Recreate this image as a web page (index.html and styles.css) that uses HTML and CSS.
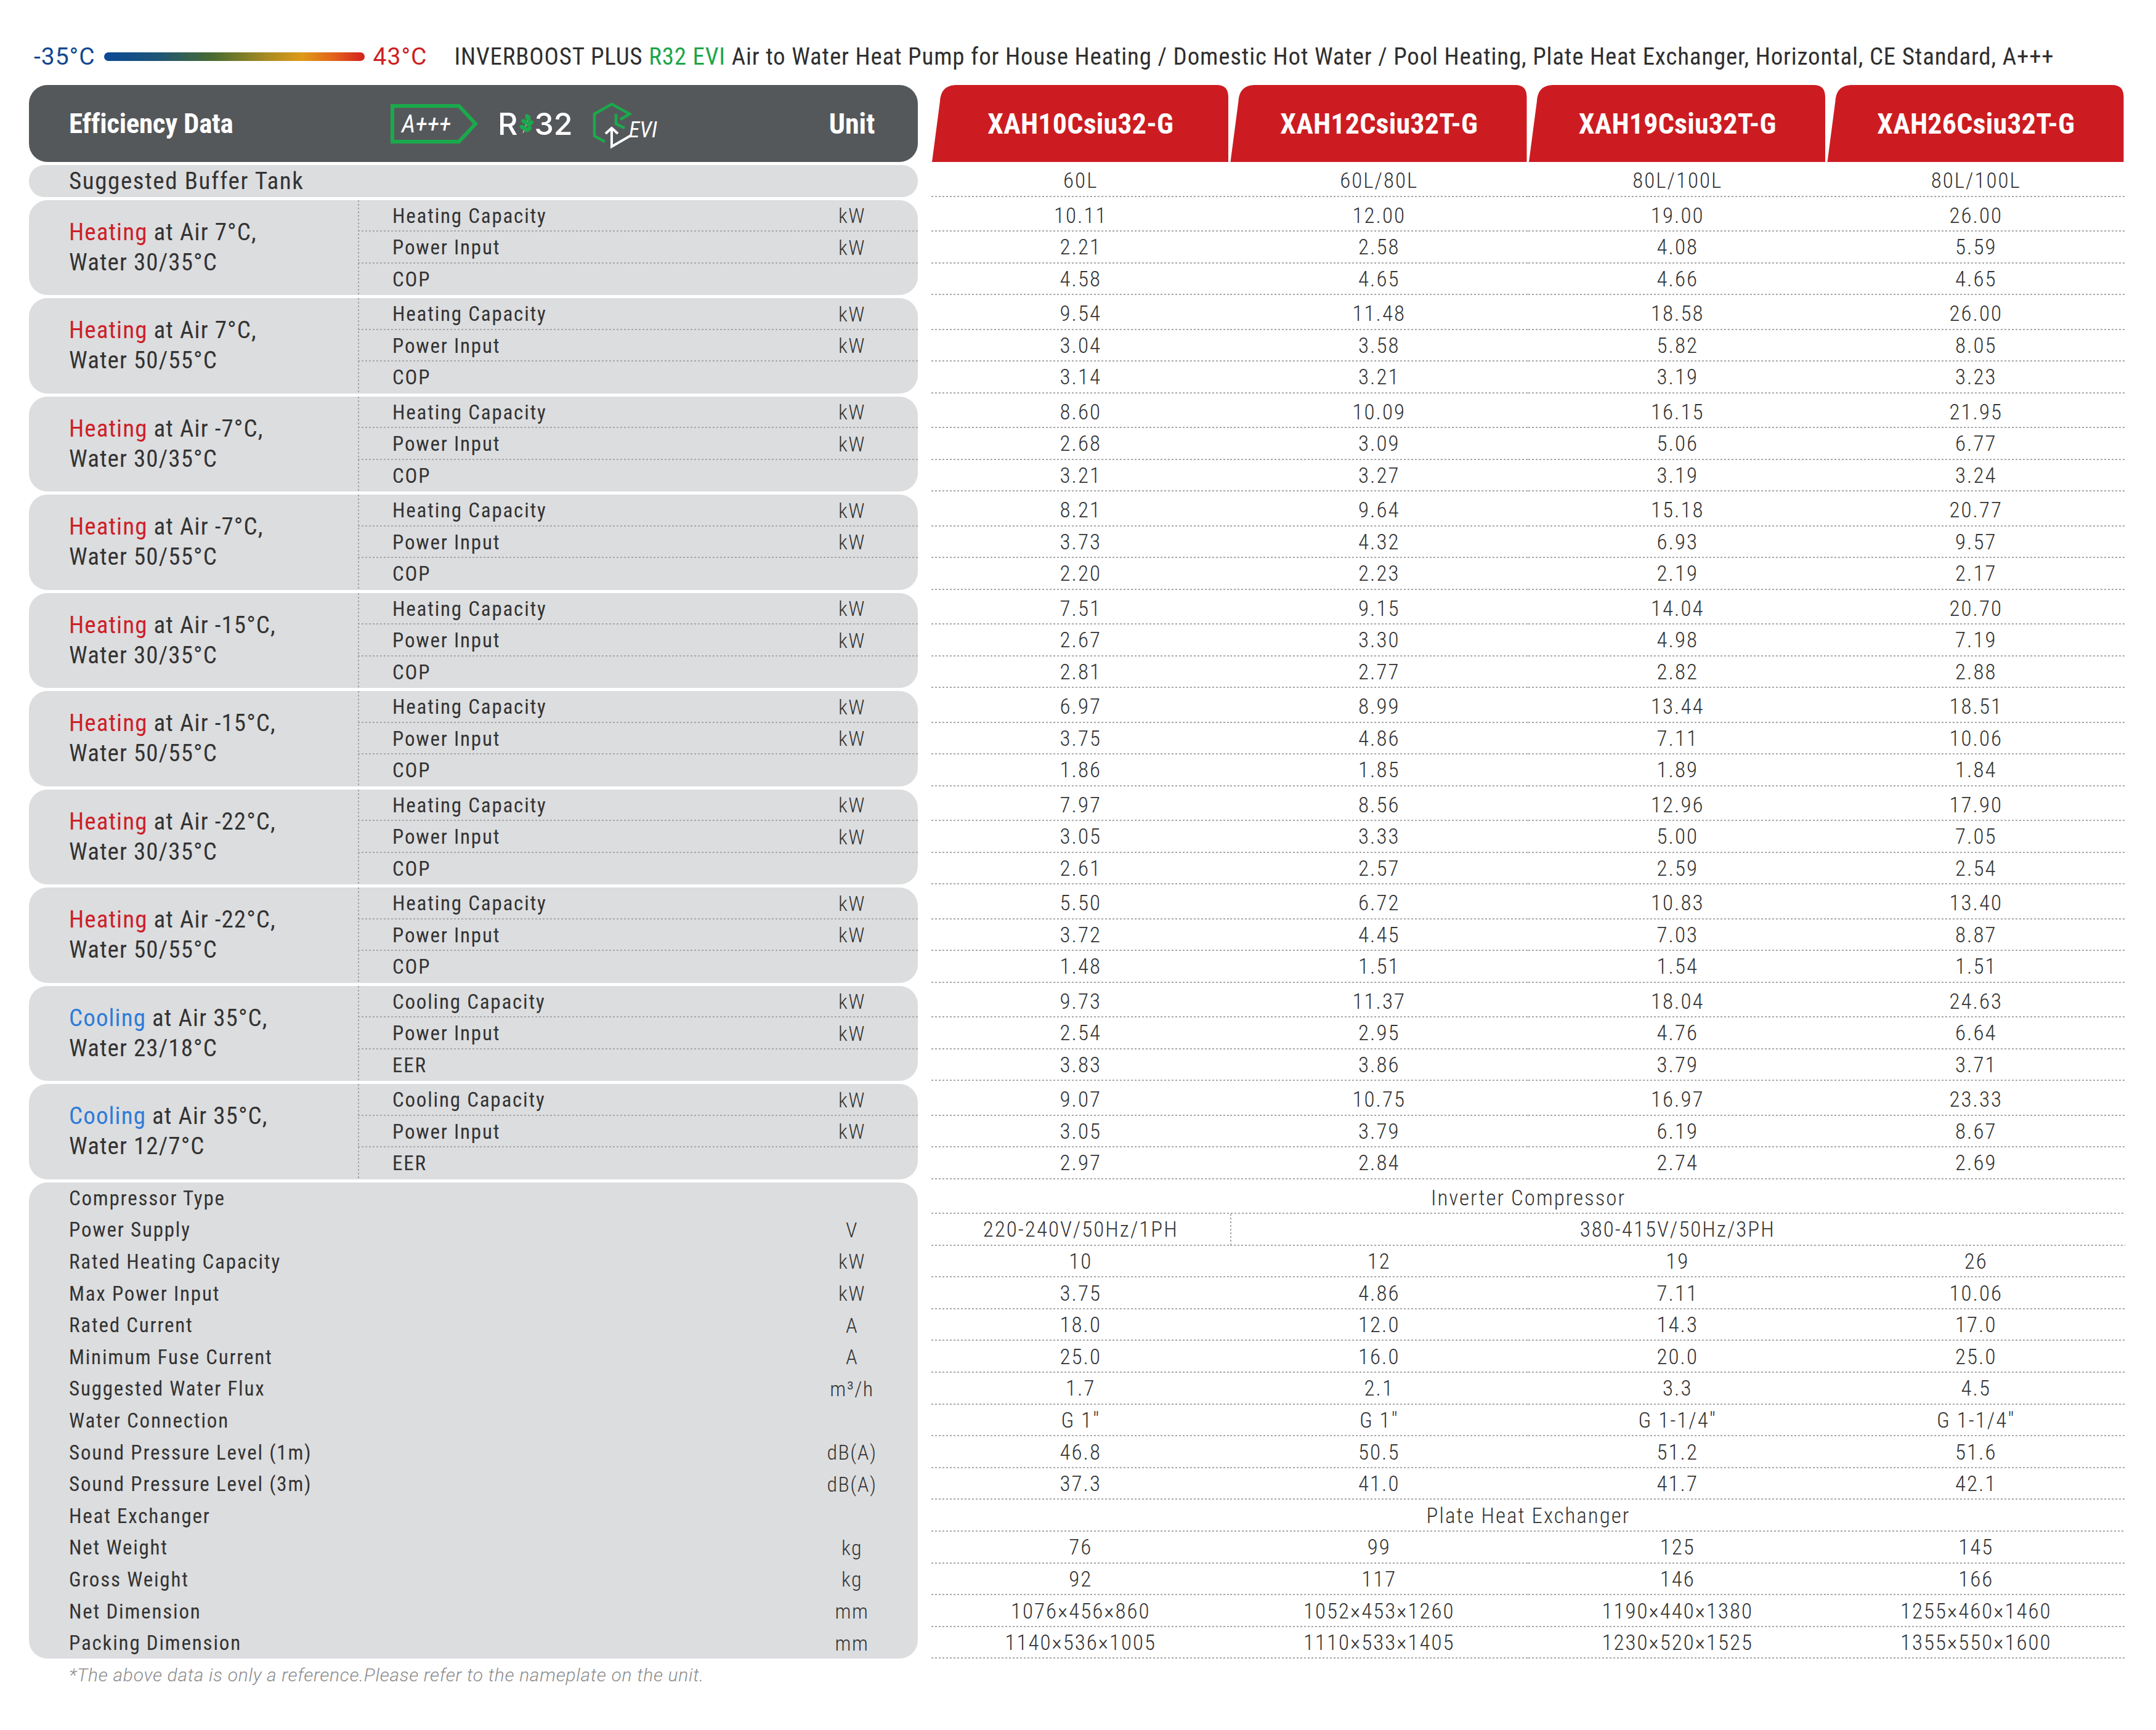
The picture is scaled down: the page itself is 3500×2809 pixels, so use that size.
FILE: index.html
```html
<!DOCTYPE html>
<html lang="en">
<head>
<meta charset="utf-8">
<title>INVERBOOST PLUS R32 EVI</title>
<link rel="stylesheet" href="styles.css">
</head>
<body>
<div class="page">
  <div class="topbar">
    <span class="t-min">-35°C</span>
    <span class="t-bar"></span>
    <span class="t-max">43°C</span>
    <h1 class="t-title">INVERBOOST PLUS <span class="g">R32 EVI</span> Air to Water Heat Pump for House Heating / Domestic Hot Water / Pool Heating, Plate Heat Exchanger, Horizontal, CE Standard, A+++</h1>
  </div>

  <div class="table">
    <div class="row">
      <div class="lhs head">
        <div class="h-label">Efficiency Data</div>
        <div class="h-logos">
          <svg class="badge" viewBox="0 0 142 64"><path d="M3,3 H111 L138,32 L111,61 H3 Z" fill="none" stroke="#1aaa4b" stroke-width="6"/><text x="18" y="46" font-family="Roboto, sans-serif" font-size="40" font-style="italic" fill="#fff">A+++</text></svg>
          <div class="r32"><span>R</span><svg class="leaf" viewBox="0 0 24 36"><path d="M6,33 L17,5" stroke="#d8d8d8" stroke-width="1.2" fill="none"/><ellipse cx="14" cy="8" rx="3.8" ry="6.2" fill="#1aaa4b" transform="rotate(-30 14 8)"/><ellipse cx="9" cy="15" rx="3.6" ry="6.4" fill="#1aaa4b" transform="rotate(-60 9 15)"/><ellipse cx="17.5" cy="17.5" rx="3.6" ry="6.4" fill="#1aaa4b" transform="rotate(50 17.5 17.5)"/><ellipse cx="6.5" cy="24" rx="3.6" ry="6.4" fill="#1aaa4b" transform="rotate(-65 6.5 24)"/><ellipse cx="14.5" cy="27" rx="3.6" ry="6.4" fill="#1aaa4b" transform="rotate(55 14.5 27)"/></svg><span>32</span></div>
          <svg class="evi" viewBox="0 0 130 85"><path d="M32,72 L15,63 L15,27 L43,11 L72,27 L57,36" fill="none" stroke="#1aaa4b" stroke-width="4.5"/><path d="M50,27 L50,43 L64,50" fill="none" stroke="#1aaa4b" stroke-width="4.5"/><path d="M33,59 L43,50 L53,59" fill="none" stroke="#fff" stroke-width="4"/><path d="M43,51 L43,80 L74,62" fill="none" stroke="#fff" stroke-width="4"/><text x="71" y="65" font-family="Roboto, sans-serif" font-size="36" font-style="italic" fill="#fff">EVI</text></svg>
        </div>
        <div class="h-unit">Unit</div>
      </div>
      <div class="rhs tabs">
        <div class="tab">XAH10Csiu32-G</div>
        <div class="tab">XAH12Csiu32T-G</div>
        <div class="tab">XAH19Csiu32T-G</div>
        <div class="tab">XAH26Csiu32T-G</div>
      </div>
    </div>

    <div class="row">
      <div class="lhs pill">Suggested Buffer Tank</div>
      <div class="rhs grid"><div class="c">60L</div><div class="c">60L/80L</div><div class="c">80L/100L</div><div class="c">80L/100L</div></div>
    </div>

    <div class="row">
      <div class="lhs grp">
        <div class="glabel"><span><span class="heat">Heating</span> at Air 7°C,</span><span>Water 30/35°C</span></div>
        <div class="gsub">
          <div class="srow"><span class="sname">Heating Capacity</span><span class="sunit">kW</span></div>
          <div class="srow"><span class="sname">Power Input</span><span class="sunit">kW</span></div>
          <div class="srow"><span class="sname">COP</span><span class="sunit"></span></div>
        </div>
      </div>
      <div class="rhs grid">
        <div class="c">10.11</div><div class="c">12.00</div><div class="c">19.00</div><div class="c">26.00</div>
        <div class="c">2.21</div><div class="c">2.58</div><div class="c">4.08</div><div class="c">5.59</div>
        <div class="c">4.58</div><div class="c">4.65</div><div class="c">4.66</div><div class="c">4.65</div>
      </div>
    </div>

    <div class="row">
      <div class="lhs grp">
        <div class="glabel"><span><span class="heat">Heating</span> at Air 7°C,</span><span>Water 50/55°C</span></div>
        <div class="gsub">
          <div class="srow"><span class="sname">Heating Capacity</span><span class="sunit">kW</span></div>
          <div class="srow"><span class="sname">Power Input</span><span class="sunit">kW</span></div>
          <div class="srow"><span class="sname">COP</span><span class="sunit"></span></div>
        </div>
      </div>
      <div class="rhs grid">
        <div class="c">9.54</div><div class="c">11.48</div><div class="c">18.58</div><div class="c">26.00</div>
        <div class="c">3.04</div><div class="c">3.58</div><div class="c">5.82</div><div class="c">8.05</div>
        <div class="c">3.14</div><div class="c">3.21</div><div class="c">3.19</div><div class="c">3.23</div>
      </div>
    </div>

    <div class="row">
      <div class="lhs grp">
        <div class="glabel"><span><span class="heat">Heating</span> at Air -7°C,</span><span>Water 30/35°C</span></div>
        <div class="gsub">
          <div class="srow"><span class="sname">Heating Capacity</span><span class="sunit">kW</span></div>
          <div class="srow"><span class="sname">Power Input</span><span class="sunit">kW</span></div>
          <div class="srow"><span class="sname">COP</span><span class="sunit"></span></div>
        </div>
      </div>
      <div class="rhs grid">
        <div class="c">8.60</div><div class="c">10.09</div><div class="c">16.15</div><div class="c">21.95</div>
        <div class="c">2.68</div><div class="c">3.09</div><div class="c">5.06</div><div class="c">6.77</div>
        <div class="c">3.21</div><div class="c">3.27</div><div class="c">3.19</div><div class="c">3.24</div>
      </div>
    </div>

    <div class="row">
      <div class="lhs grp">
        <div class="glabel"><span><span class="heat">Heating</span> at Air -7°C,</span><span>Water 50/55°C</span></div>
        <div class="gsub">
          <div class="srow"><span class="sname">Heating Capacity</span><span class="sunit">kW</span></div>
          <div class="srow"><span class="sname">Power Input</span><span class="sunit">kW</span></div>
          <div class="srow"><span class="sname">COP</span><span class="sunit"></span></div>
        </div>
      </div>
      <div class="rhs grid">
        <div class="c">8.21</div><div class="c">9.64</div><div class="c">15.18</div><div class="c">20.77</div>
        <div class="c">3.73</div><div class="c">4.32</div><div class="c">6.93</div><div class="c">9.57</div>
        <div class="c">2.20</div><div class="c">2.23</div><div class="c">2.19</div><div class="c">2.17</div>
      </div>
    </div>

    <div class="row">
      <div class="lhs grp">
        <div class="glabel"><span><span class="heat">Heating</span> at Air -15°C,</span><span>Water 30/35°C</span></div>
        <div class="gsub">
          <div class="srow"><span class="sname">Heating Capacity</span><span class="sunit">kW</span></div>
          <div class="srow"><span class="sname">Power Input</span><span class="sunit">kW</span></div>
          <div class="srow"><span class="sname">COP</span><span class="sunit"></span></div>
        </div>
      </div>
      <div class="rhs grid">
        <div class="c">7.51</div><div class="c">9.15</div><div class="c">14.04</div><div class="c">20.70</div>
        <div class="c">2.67</div><div class="c">3.30</div><div class="c">4.98</div><div class="c">7.19</div>
        <div class="c">2.81</div><div class="c">2.77</div><div class="c">2.82</div><div class="c">2.88</div>
      </div>
    </div>

    <div class="row">
      <div class="lhs grp">
        <div class="glabel"><span><span class="heat">Heating</span> at Air -15°C,</span><span>Water 50/55°C</span></div>
        <div class="gsub">
          <div class="srow"><span class="sname">Heating Capacity</span><span class="sunit">kW</span></div>
          <div class="srow"><span class="sname">Power Input</span><span class="sunit">kW</span></div>
          <div class="srow"><span class="sname">COP</span><span class="sunit"></span></div>
        </div>
      </div>
      <div class="rhs grid">
        <div class="c">6.97</div><div class="c">8.99</div><div class="c">13.44</div><div class="c">18.51</div>
        <div class="c">3.75</div><div class="c">4.86</div><div class="c">7.11</div><div class="c">10.06</div>
        <div class="c">1.86</div><div class="c">1.85</div><div class="c">1.89</div><div class="c">1.84</div>
      </div>
    </div>

    <div class="row">
      <div class="lhs grp">
        <div class="glabel"><span><span class="heat">Heating</span> at Air -22°C,</span><span>Water 30/35°C</span></div>
        <div class="gsub">
          <div class="srow"><span class="sname">Heating Capacity</span><span class="sunit">kW</span></div>
          <div class="srow"><span class="sname">Power Input</span><span class="sunit">kW</span></div>
          <div class="srow"><span class="sname">COP</span><span class="sunit"></span></div>
        </div>
      </div>
      <div class="rhs grid">
        <div class="c">7.97</div><div class="c">8.56</div><div class="c">12.96</div><div class="c">17.90</div>
        <div class="c">3.05</div><div class="c">3.33</div><div class="c">5.00</div><div class="c">7.05</div>
        <div class="c">2.61</div><div class="c">2.57</div><div class="c">2.59</div><div class="c">2.54</div>
      </div>
    </div>

    <div class="row">
      <div class="lhs grp">
        <div class="glabel"><span><span class="heat">Heating</span> at Air -22°C,</span><span>Water 50/55°C</span></div>
        <div class="gsub">
          <div class="srow"><span class="sname">Heating Capacity</span><span class="sunit">kW</span></div>
          <div class="srow"><span class="sname">Power Input</span><span class="sunit">kW</span></div>
          <div class="srow"><span class="sname">COP</span><span class="sunit"></span></div>
        </div>
      </div>
      <div class="rhs grid">
        <div class="c">5.50</div><div class="c">6.72</div><div class="c">10.83</div><div class="c">13.40</div>
        <div class="c">3.72</div><div class="c">4.45</div><div class="c">7.03</div><div class="c">8.87</div>
        <div class="c">1.48</div><div class="c">1.51</div><div class="c">1.54</div><div class="c">1.51</div>
      </div>
    </div>

    <div class="row">
      <div class="lhs grp">
        <div class="glabel"><span><span class="cool">Cooling</span> at Air 35°C,</span><span>Water 23/18°C</span></div>
        <div class="gsub">
          <div class="srow"><span class="sname">Cooling Capacity</span><span class="sunit">kW</span></div>
          <div class="srow"><span class="sname">Power Input</span><span class="sunit">kW</span></div>
          <div class="srow"><span class="sname">EER</span><span class="sunit"></span></div>
        </div>
      </div>
      <div class="rhs grid">
        <div class="c">9.73</div><div class="c">11.37</div><div class="c">18.04</div><div class="c">24.63</div>
        <div class="c">2.54</div><div class="c">2.95</div><div class="c">4.76</div><div class="c">6.64</div>
        <div class="c">3.83</div><div class="c">3.86</div><div class="c">3.79</div><div class="c">3.71</div>
      </div>
    </div>

    <div class="row">
      <div class="lhs grp">
        <div class="glabel"><span><span class="cool">Cooling</span> at Air 35°C,</span><span>Water 12/7°C</span></div>
        <div class="gsub">
          <div class="srow"><span class="sname">Cooling Capacity</span><span class="sunit">kW</span></div>
          <div class="srow"><span class="sname">Power Input</span><span class="sunit">kW</span></div>
          <div class="srow"><span class="sname">EER</span><span class="sunit"></span></div>
        </div>
      </div>
      <div class="rhs grid">
        <div class="c">9.07</div><div class="c">10.75</div><div class="c">16.97</div><div class="c">23.33</div>
        <div class="c">3.05</div><div class="c">3.79</div><div class="c">6.19</div><div class="c">8.67</div>
        <div class="c">2.97</div><div class="c">2.84</div><div class="c">2.74</div><div class="c">2.69</div>
      </div>
    </div>

    <div class="row">
      <div class="lhs spec">
        <div class="sp"><span class="sname">Compressor Type</span><span class="sunit"></span></div>
        <div class="sp"><span class="sname">Power Supply</span><span class="sunit">V</span></div>
        <div class="sp"><span class="sname">Rated Heating Capacity</span><span class="sunit">kW</span></div>
        <div class="sp"><span class="sname">Max Power Input</span><span class="sunit">kW</span></div>
        <div class="sp"><span class="sname">Rated Current</span><span class="sunit">A</span></div>
        <div class="sp"><span class="sname">Minimum Fuse Current</span><span class="sunit">A</span></div>
        <div class="sp"><span class="sname">Suggested Water Flux</span><span class="sunit">m³/h</span></div>
        <div class="sp"><span class="sname">Water Connection</span><span class="sunit"></span></div>
        <div class="sp"><span class="sname">Sound Pressure Level (1m)</span><span class="sunit">dB(A)</span></div>
        <div class="sp"><span class="sname">Sound Pressure Level (3m)</span><span class="sunit">dB(A)</span></div>
        <div class="sp"><span class="sname">Heat Exchanger</span><span class="sunit"></span></div>
        <div class="sp"><span class="sname">Net Weight</span><span class="sunit">kg</span></div>
        <div class="sp"><span class="sname">Gross Weight</span><span class="sunit">kg</span></div>
        <div class="sp"><span class="sname">Net Dimension</span><span class="sunit">mm</span></div>
        <div class="sp"><span class="sname">Packing Dimension</span><span class="sunit">mm</span></div>
      </div>
      <div class="rhs grid sgrid">
        <div class="c span4">Inverter Compressor</div>
        <div class="c">220-240V/50Hz/1PH</div><div class="c span3">380-415V/50Hz/3PH</div>
        <div class="c">10</div><div class="c">12</div><div class="c">19</div><div class="c">26</div>
        <div class="c">3.75</div><div class="c">4.86</div><div class="c">7.11</div><div class="c">10.06</div>
        <div class="c">18.0</div><div class="c">12.0</div><div class="c">14.3</div><div class="c">17.0</div>
        <div class="c">25.0</div><div class="c">16.0</div><div class="c">20.0</div><div class="c">25.0</div>
        <div class="c">1.7</div><div class="c">2.1</div><div class="c">3.3</div><div class="c">4.5</div>
        <div class="c">G 1"</div><div class="c">G 1"</div><div class="c">G 1-1/4"</div><div class="c">G 1-1/4"</div>
        <div class="c">46.8</div><div class="c">50.5</div><div class="c">51.2</div><div class="c">51.6</div>
        <div class="c">37.3</div><div class="c">41.0</div><div class="c">41.7</div><div class="c">42.1</div>
        <div class="c span4">Plate Heat Exchanger</div>
        <div class="c">76</div><div class="c">99</div><div class="c">125</div><div class="c">145</div>
        <div class="c">92</div><div class="c">117</div><div class="c">146</div><div class="c">166</div>
        <div class="c">1076×456×860</div><div class="c">1052×453×1260</div><div class="c">1190×440×1380</div><div class="c">1255×460×1460</div>
        <div class="c">1140×536×1005</div><div class="c">1110×533×1405</div><div class="c">1230×520×1525</div><div class="c">1355×550×1600</div>
      </div>
    </div>
  </div>

  <p class="note">*The above data is only a reference.Please refer to the nameplate on the unit.</p>
</div>
</body>
</html>
```

FILE: styles.css
```css
* { box-sizing: border-box; margin: 0; padding: 0; }
html, body { background: #fff; }
body {
  width: 3500px;
  font-family: "Roboto", "Liberation Sans", sans-serif;
  font-stretch: 85%;
  color: #333;
}
.page { padding-top: 62px; }

.topbar {
  display: flex;
  align-items: center;
  height: 60px;
  padding-left: 55px;
  white-space: nowrap;
}
.t-min, .t-max { font-size: 39px; font-weight: 400; font-stretch: 100%; letter-spacing: 1px; }
.t-min { color: #12498f; }
.t-max { color: #cd1f24; margin-left: 14px; }
.t-bar {
  width: 423px;
  height: 14px;
  border-radius: 7px;
  margin-left: 14px;
  background: linear-gradient(90deg, #0a4a95 0%, #1d5577 20%, #4a6b30 42%, #a68b22 62%, #de9a18 76%, #e2641b 88%, #d4201f 100%);
}
.t-title { font-size: 39px; font-weight: 400; margin-left: 44px; color: #2f2f2f; letter-spacing: 0.8px; }
.t-title .g { color: #1da64b; }

.table {
  display: flex;
  flex-direction: column;
  gap: 5px;
  margin-top: 16px;
  margin-left: 47px;
  width: 3403px;
}
.row { display: flex; align-items: flex-start; }
.lhs { flex: none; width: 1443px; }
.rhs { flex: none; width: 1938px; margin-left: 22px; }

.head {
  height: 125px;
  border-radius: 30px;
  background: #55585b;
  color: #fff;
  display: flex;
  align-items: center;
}
.h-label { width: 534px; padding-left: 65px; font-size: 45px; font-weight: 700; font-stretch: 75%; letter-spacing: -0.3px; }
.h-logos { flex: 1; display: flex; align-items: center; padding-left: 53px; }
.badge { width: 142px; height: 64px; flex: none; }
.r32 {
  display: flex;
  align-items: center;
  margin-left: 32px;
  font-family: "Inter", "Roboto", sans-serif;
  font-stretch: 100%;
  font-size: 50px;
  font-weight: 500;
  line-height: 1;
  color: #fff;
}
.leaf { width: 24px; height: 36px; margin: 0 0 0 3px; flex: none; }
.evi { width: 130px; height: 85px; margin-left: 20px; flex: none; }
.h-unit { width: 214px; text-align: center; font-size: 46px; font-weight: 700; font-stretch: 75%; }

.tabs { display: grid; grid-template-columns: repeat(4, 1fr); height: 125px; }
.tab {
  background: #cc1c21;
  clip-path: path("M1,125 L14,26 C15.5,8 24,0 42,0 L463,0 C476,0 482,6 482,20 L482,125 Z");
  display: flex;
  align-items: center;
  justify-content: center;
  color: #fff;
  font-size: 46px;
  font-weight: 700;
  font-stretch: 78%;
  letter-spacing: 0.2px;
}

.pill {
  height: 51.5px;
  border-radius: 25px;
  background: #dcdddf;
  display: flex;
  align-items: center;
  padding-left: 65px;
  font-size: 39px;
  letter-spacing: 1.6px;
}

.grid { display: grid; grid-template-columns: repeat(4, 1fr); grid-auto-rows: 51.5px; }
.c {
  display: flex;
  align-items: center;
  justify-content: center;
  font-size: 35px;
  font-weight: 300;
  letter-spacing: 2px;
  color: #333;
  white-space: nowrap;
  background: linear-gradient(90deg, #a8a8a8 50%, rgba(0,0,0,0) 50%) 0 100% / 6px 2px repeat-x;
}
.span4 { grid-column: span 4; }
.span3 {
  grid-column: span 3;
  background:
    linear-gradient(90deg, #a8a8a8 50%, rgba(0,0,0,0) 50%) 0 100% / 6px 2px repeat-x,
    linear-gradient(180deg, #a8a8a8 50%, rgba(0,0,0,0) 50%) 0 0 / 2px 6px repeat-y;
}

.grp {
  height: 154.5px;
  border-radius: 30px;
  background: #dcdddf;
  display: flex;
  overflow: hidden;
}
.glabel {
  width: 534px;
  padding-left: 65px;
  display: flex;
  flex-direction: column;
  justify-content: center;
  font-size: 39px;
  line-height: 49px;
  letter-spacing: 1.1px;
}
.heat { color: #cd2027; }
.cool { color: #2c7cd8; }
.gsub {
  flex: 1;
  display: flex;
  flex-direction: column;
  background: linear-gradient(180deg, #a8a8a8 50%, rgba(0,0,0,0) 50%) 0 0 / 2px 6px repeat-y;
}
.srow {
  flex: 1;
  display: flex;
  align-items: center;
  background: linear-gradient(90deg, #a8a8a8 50%, rgba(0,0,0,0) 50%) 0 100% / 6px 2px repeat-x;
}
.srow:last-child { background: none; }
.sname { flex: 1; padding-left: 56px; font-size: 33px; letter-spacing: 1.8px; }
.sunit { width: 214px; flex: none; text-align: center; font-size: 34px; font-weight: 300; letter-spacing: 1.5px; }

.spec {
  border-radius: 30px;
  background: #dcdddf;
  display: grid;
  grid-auto-rows: 51.6px;
}
.sp { display: flex; align-items: center; }
.sp .sname { padding-left: 65px; }
.sgrid { grid-auto-rows: 51.6px; }

.note {
  font-size: 30px;
  font-style: italic;
  font-weight: 300;
  font-stretch: 100%;
  letter-spacing: 0.7px;
  color: #8c8c8c;
  padding-left: 112px;
  margin-top: 9px;
}
```
